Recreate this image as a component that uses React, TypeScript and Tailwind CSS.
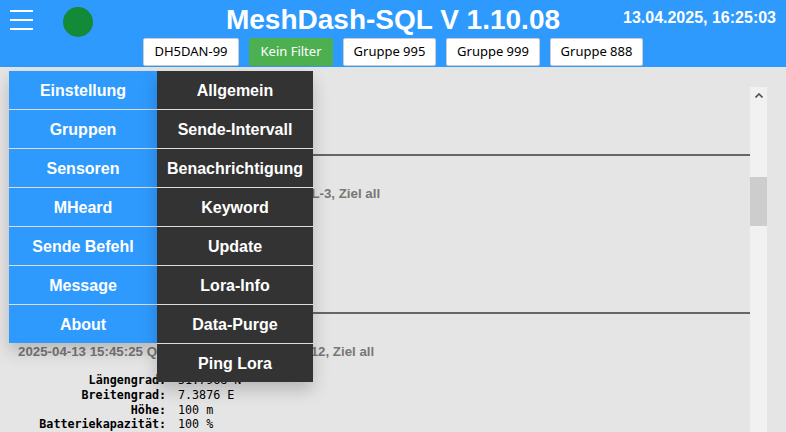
const filters = [
  {label: "DH5DAN-99", w: "w-[96px]", active: false},
  {label: "Kein Filter", w: "w-[84px]", active: true},
  {label: "Gruppe 995", w: "w-[93px]", active: false},
  {label: "Gruppe 999", w: "w-[94px]", active: false},
  {label: "Gruppe 888", w: "w-[93px]", active: false},
];

const mainMenu = ["Einstellung", "Gruppen", "Sensoren", "MHeard", "Sende Befehl", "Message", "About"];
const subMenu = [
  "Allgemein",
  "Sende-Intervall",
  "Benachrichtigung",
  "Keyword",
  "Update",
  "Lora-Info",
  "Data-Purge",
  "Ping Lora",
];

const posData = [
  {label: "Längengrad:", value: "51.7968 N"},
  {label: "Breitengrad:", value: "7.3876 E"},
  {label: "Höhe:", value: "100 m"},
  {label: "Batteriekapazität:", value: "100 %"},
];

function PosTable() {
  return (
    <table className="mt-[14px] border-collapse font-['DejaVu_Sans_Mono',monospace] text-[11.7px] leading-[14.6px] text-black">
      <tbody>
        {posData.map((row) => (
          <tr key={row.label}>
            <td className="w-[157px] p-0 text-right font-bold">{row.label}</td>
            <td className="p-0 pl-[12px]">{row.value}</td>
          </tr>
        ))}
      </tbody>
    </table>
  );
}

function Message({head}: {head: string}) {
  return (
    <div className="border-t-2 border-[#666]">
      <p className="mt-[30px] pl-[9px] text-[13.3px] leading-[15px] font-bold whitespace-nowrap text-[#777]">{head}</p>
      <PosTable />
    </div>
  );
}

export default function App() {
  return (
    <div className="relative h-[432px] overflow-hidden bg-[#e5e5e5] font-['Liberation_Sans',Arial,sans-serif]">
      {/* Kopfzeile */}
      <header className="h-[67px] bg-[#2e9afe] text-white">
        <div className="grid h-[38px] grid-cols-[1fr_auto_1fr] items-start">
          <div className="flex items-start">
            <div className="ml-[10px] mt-[10px] flex w-[23px] flex-col gap-[7px]">
              <span className="h-[2px] bg-white" />
              <span className="h-[2px] bg-white" />
              <span className="h-[2px] bg-white" />
            </div>
            <div className="ml-[30px] mt-[7px] h-[30px] w-[30px] rounded-full bg-[#128a37]" />
          </div>
          <h1 className="mt-[4px] text-[28px] leading-[32px] font-bold">MeshDash-SQL V 1.10.08</h1>
          <div className="mt-[9px] pr-[10px] text-right text-[16px] leading-[18px] font-bold">
            13.04.2025, 16:25:03
          </div>
        </div>
        <div className="flex justify-center gap-[10px]">
          {filters.map((f) => (
            <button
              key={f.label}
              className={`${f.w} h-[28px] rounded-[2px] border font-['Noto_Sans',sans-serif] text-[13px] ${
                f.active ? "border-[#4caf50] bg-[#4caf50] text-white" : "border-[#ccc] bg-white text-black"
              }`}
            >
              {f.label}
            </button>
          ))}
        </div>
      </header>

      {/* Nachrichtenliste */}
      <div className="mt-[20px] ml-[9px] flex h-[345px] w-[758px]">
        <div className="flex-1 overflow-hidden">
          <div className="h-[67px]" />
          <Message head="2025-04-13 15:46:02 Quelle DH5DAN-99 via DOL-3, Ziel all" />
          <div className="h-[39px]" />
          <Message head="2025-04-13 15:45:25 Quelle DH5DAN-99 via DB12, Ziel all" />
        </div>
        <div className="flex w-[17px] flex-col bg-[#f1f1f1]">
          <div className="flex h-[17px] items-center justify-center">
            <svg width="8" height="5" viewBox="0 0 8 5">
              <path d="M0.5 4.5 L4 1 L7.5 4.5" fill="none" stroke="#505050" strokeWidth="1.6" />
            </svg>
          </div>
          <div className="mt-[73px] h-[49px] bg-[#cdcdcd]" />
        </div>
      </div>

      {/* Aufgeklapptes Menü */}
      <div className="absolute top-[71px] left-[9px] flex items-start text-[16px] font-bold text-white">
        <ul className="w-[148px] bg-[#2e9afe] shadow-[0_8px_16px_rgba(0,0,0,0.2)]">
          {mainMenu.map((item, i) => (
            <li
              key={item}
              className={`flex items-center justify-center pt-[2px] ${i < mainMenu.length - 1 ? "h-[39px] border-b border-[#ddd]" : "h-[38px]"}`}
            >
              {item}
            </li>
          ))}
        </ul>
        <ul className="w-[156px] bg-[#333] shadow-[0_8px_16px_rgba(0,0,0,0.2)]">
          {subMenu.map((item, i) => (
            <li
              key={item}
              className={`flex items-center justify-center pt-[2px] ${i < subMenu.length - 1 ? "h-[39px] border-b border-[#ddd]" : "h-[38px]"}`}
            >
              {item}
            </li>
          ))}
        </ul>
      </div>
    </div>
  );
}
